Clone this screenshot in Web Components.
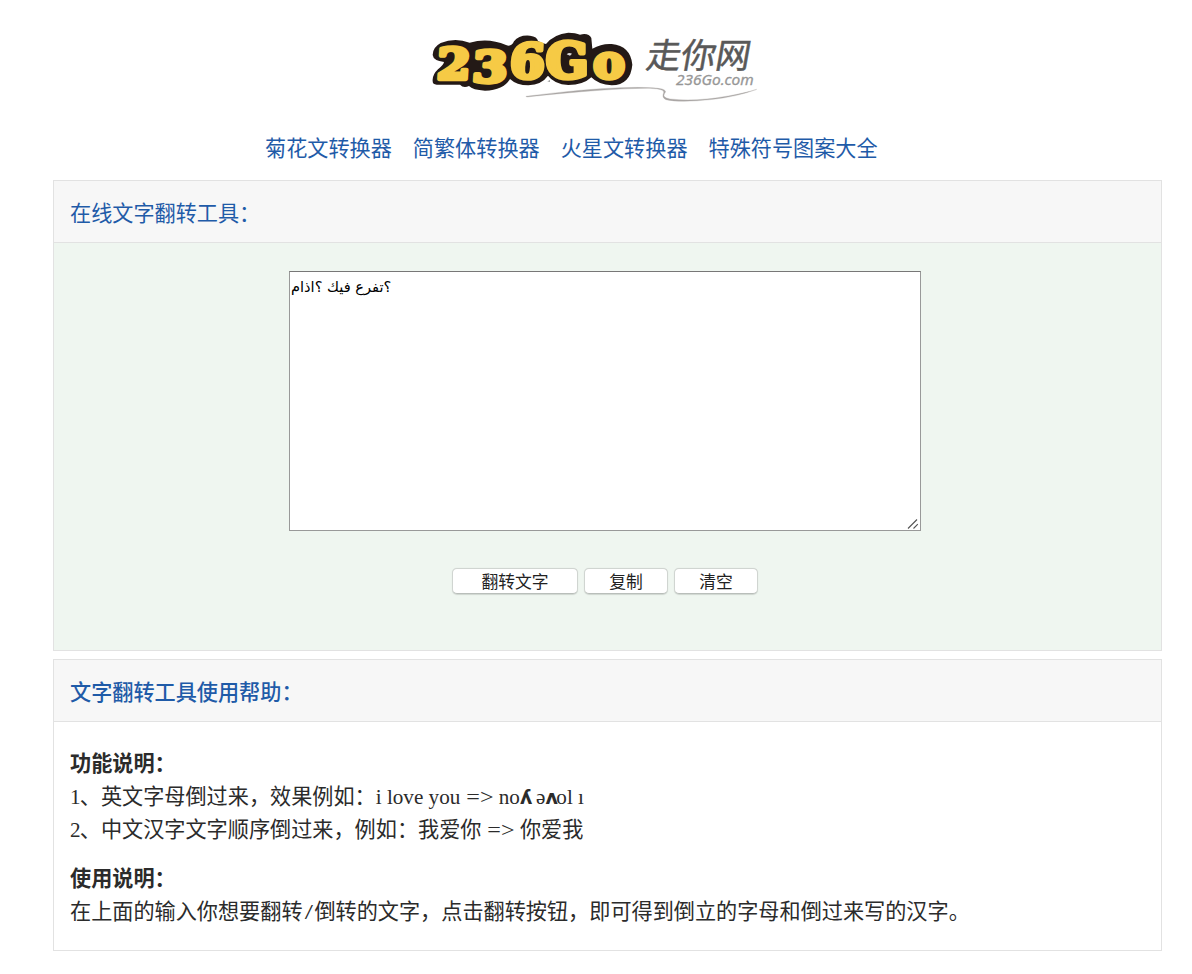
<!DOCTYPE html>
<html lang="zh-CN">
<head>
<meta charset="utf-8">
<title>文字翻转工具</title>
<style>
html,body{margin:0;background:#fff}
body{font-family:"Liberation Serif","Noto Sans CJK SC",serif;font-size:21.15px;color:#2b2b2b;height:974px;overflow:hidden}
</style>
</head>
<body>
<flip-page></flip-page>
<script>
const define = (name, html) => customElements.define(name, class extends HTMLElement {
  constructor(){ super(); this.attachShadow({mode:'open'}).innerHTML = html; }
});

define('site-logo', `<style>
:host{display:block;width:350px;height:90px}
svg{display:block}
.n{font-family:"DejaVu Serif",serif;font-weight:bold;fill:#f6ca45;stroke:#f6ca45;stroke-width:13;stroke-linejoin:round}
</style>
<svg width="350" height="90" viewBox="0 0 1050 270">
<path d="M38 184Q36 165 54 148Q72 133 72 126Q40 122 38 105Q38 82 62 69Q105 52 149 68Q205 52 258 75Q274 82 282 64Q297 44 330 47Q352 50 354 63Q366 70 378 72Q402 42 445 38Q467 38 480 44Q506 38 514 54L517 86Q545 70 575 72Q632 78 637 134Q632 194 575 196Q535 194 514 172Q490 195 445 195Q402 192 384 167Q365 194 325 196Q290 196 270 177Q250 211 195 212Q158 210 147 198Q130 205 120 194L50 194Q38 194 38 184Z" fill="#231916"/>
<g class="n">
<text transform="translate(49 176) scale(1.13 1) skewX(-3)" font-size="128">2</text>
<text transform="translate(155 186) scale(1.18 1) skewX(-3)" font-size="128">3</text>
<text transform="translate(267 175) scale(1.07 1) skewX(-3)" font-size="142">6</text>
<text transform="translate(377 174) scale(1.04 1)" font-size="145">G</text>
<text transform="translate(520 175) scale(1.03 1)" font-size="138">o</text>
</g>
<path d="M440 103Q447 96 456 101L450 107Z" fill="#ddd"/>
<text transform="translate(674 143) skewX(-10)" font-family="Noto Sans CJK SC" font-size="104" font-weight="400" fill="#595959" stroke="#595959" stroke-width="1.5" textLength="312" lengthAdjust="spacingAndGlyphs">走你网</text>
<text x="768" y="195" font-family="Open Sans,Noto Sans,sans-serif" font-style="italic" font-size="43" fill="#969696" stroke="#969696" textLength="233" lengthAdjust="spacingAndGlyphs">236Go.com</text>
<path d="M318 229Q490 207 600 203Q700 200 726 207Q742 212 734 220Q725 233 750 237Q825 246 925 228Q980 218 1010 208Q955 229 880 238Q780 249 738 239Q724 233 731 218Q735 207 690 205Q570 204 320 231Z" fill="#aaa6a5" stroke="#aaa6a5" stroke-width="1"/>
<path d="M382 184L390 181V185Z" fill="#777"/>
</svg>`);

define('site-nav', `<style>
:host{display:flex;gap:21px;color:#1f5ba8;line-height:32px;height:32px}
::slotted(a){color:inherit;text-decoration:none;white-space:nowrap}
</style><slot></slot>`);

define('tool-panel', `<style>
:host{display:flex;flex-direction:column;box-sizing:border-box;border:1px solid #e2e2e2;background:#fff}
header{box-sizing:border-box;height:62px;flex:none;display:flex;align-items:center;padding:4px 0 0 16px;background:#f7f7f7;border-bottom:1px solid #e2e2e2;color:#1f5ba8;line-height:32px}
main{flex:1;background:var(--panel-bg,#fff)}
</style><header><slot name="title"></slot></header><main><slot></slot></main>`);

define('text-input', `<style>
:host{display:block;position:relative;width:632px;height:260px}
textarea{display:block;box-sizing:border-box;width:100%;height:100%;margin:0;padding:5px 0 0 1px;border:1px solid #999;border-top-color:#777;border-radius:0;resize:none;outline:0;background:#fff;color:#000;font:14.6px/20px "DejaVu Sans",sans-serif;overflow:hidden}
svg{position:absolute;right:2px;bottom:1px}
</style><textarea spellcheck="false">؟تفرع فيك ؟اذام</textarea>
<svg width="12" height="12" viewBox="0 0 12 12"><path d="M1 10.5L10 1.5M6.5 10.5L10.8 6.2" stroke="#555" stroke-width="1.1"/></svg>`);

define('push-button', `<style>
:host{display:block}
button{box-sizing:border-box;width:100%;height:26px;margin:0;padding:0;border:1px solid #d0d5d1;border-bottom-color:#b9beba;border-radius:5px;background:#fff;color:#222;font:16.8px/24px "Noto Sans CJK SC",sans-serif;box-shadow:0 .5px 1px #0002;display:block}
</style><button><slot></slot></button>`);

define('help-text', `<style>
:host{display:block;padding:25.5px 16px 0;line-height:33.3px;white-space:nowrap}
::slotted(p){margin:0 0 15.5px}
</style><slot></slot>`);

define('flip-page', `<style>
:host{display:flex;flex-direction:column;padding:20px 30px 0 53px}
site-logo{margin-left:367px}
site-nav{margin:23px 0 15px 212px}
.tool{height:471px;--panel-bg:#eff6f0}
.help{height:292px;margin-top:8px}
.form{display:flex;flex-direction:column;padding:28px 0 0 235px}
.buttons{display:flex;gap:6px;margin:37px 0 0 163px}
.w{width:126px}.s{width:84px}
b{font-weight:bold}
.t{font-weight:500}
.d{letter-spacing:-.8px}
.q{display:inline-block;transform:scaleX(1.14);margin:0 2px;line-height:1}
.sl{display:inline-block;transform:scaleX(1.4);margin:0 3px;line-height:1}
.y{font:bold 19px/1 "DejaVu Sans";letter-spacing:-1.5px}
</style>
<site-logo></site-logo>
<site-nav><a>菊花文转换器</a><a>简繁体转换器</a><a>火星文转换器</a><a>特殊符号图案大全</a></site-nav>
<tool-panel class="tool"><span slot="title">在线文字翻转工具：</span>
<div class="form"><text-input></text-input>
<div class="buttons"><push-button class="w">翻转文字</push-button><push-button class="s">复制</push-button><push-button class="s">清空</push-button></div></div>
</tool-panel>
<tool-panel class="help"><span slot="title" class="t">文字翻转工具使用帮助：</span>
<help-text><p><b>功能说明：</b><br><span class="d">1</span>、英文字母倒过来，效果例如：i love you <span class="q">=&gt;</span> no<span class="y">ʎ</span> ǝ<span class="y">ʌ</span>ol ı<br><span class="d">2</span>、中文汉字文字顺序倒过来，例如：我爱你 <span class="q">=&gt;</span> 你爱我</p>
<p><b>使用说明：</b><br>在上面的输入你想要翻转<span class="sl">/</span>倒转的文字，点击翻转按钮，即可得到倒立的字母和倒过来写的汉字。</p></help-text>
</tool-panel>`);
</script>
</body>
</html>
